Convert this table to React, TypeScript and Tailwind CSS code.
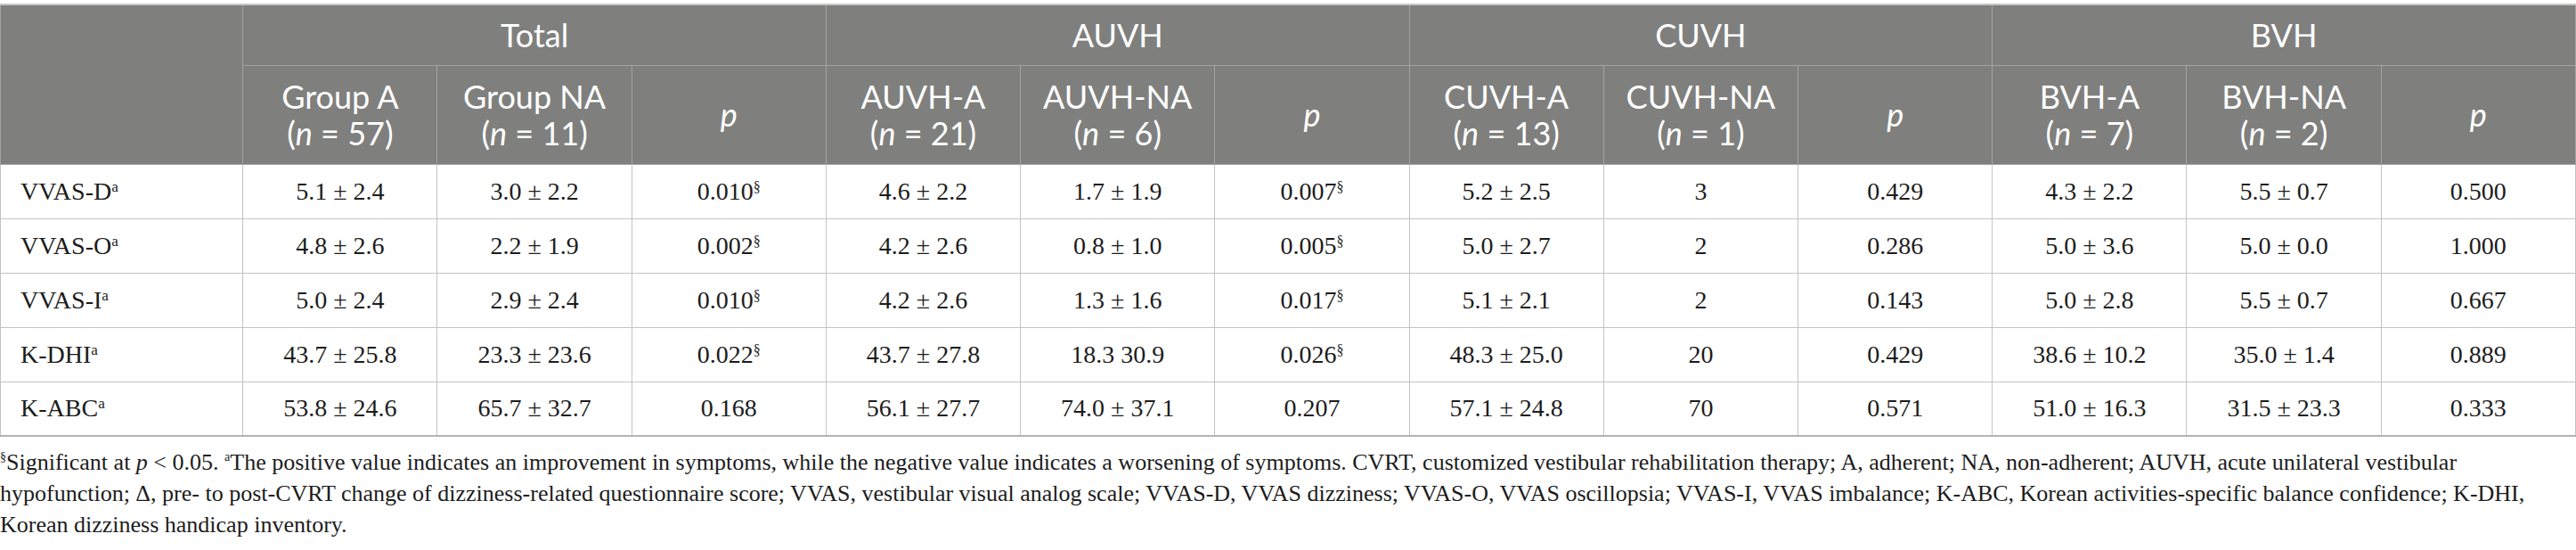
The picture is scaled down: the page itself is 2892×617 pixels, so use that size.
import React from 'react';

type Row = { label: string; cells: string[]; sig: boolean[] };

// 12 data columns: Total (A, NA, p), AUVH (A, NA, p), CUVH (A, NA, p), BVH (A, NA, p)
const rows: Row[] = [
  {
    label: 'VVAS-D',
    cells: ['5.1 ± 2.4', '3.0 ± 2.2', '0.010', '4.6 ± 2.2', '1.7 ± 1.9', '0.007', '5.2 ± 2.5', '3', '0.429', '4.3 ± 2.2', '5.5 ± 0.7', '0.500'],
    sig: [false, false, true, false, false, true, false, false, false, false, false, false],
  },
  {
    label: 'VVAS-O',
    cells: ['4.8 ± 2.6', '2.2 ± 1.9', '0.002', '4.2 ± 2.6', '0.8 ± 1.0', '0.005', '5.0 ± 2.7', '2', '0.286', '5.0 ± 3.6', '5.0 ± 0.0', '1.000'],
    sig: [false, false, true, false, false, true, false, false, false, false, false, false],
  },
  {
    label: 'VVAS-I',
    cells: ['5.0 ± 2.4', '2.9 ± 2.4', '0.010', '4.2 ± 2.6', '1.3 ± 1.6', '0.017', '5.1 ± 2.1', '2', '0.143', '5.0 ± 2.8', '5.5 ± 0.7', '0.667'],
    sig: [false, false, true, false, false, true, false, false, false, false, false, false],
  },
  {
    label: 'K-DHI',
    cells: ['43.7 ± 25.8', '23.3 ± 23.6', '0.022', '43.7 ± 27.8', '18.3 30.9', '0.026', '48.3 ± 25.0', '20', '0.429', '38.6 ± 10.2', '35.0 ± 1.4', '0.889'],
    sig: [false, false, true, false, false, true, false, false, false, false, false, false],
  },
  {
    label: 'K-ABC',
    cells: ['53.8 ± 24.6', '65.7 ± 32.7', '0.168', '56.1 ± 27.7', '74.0 ± 37.1', '0.207', '57.1 ± 24.8', '70', '0.571', '51.0 ± 16.3', '31.5 ± 23.3', '0.333'],
    sig: new Array(12).fill(false),
  },
];

const groups = ['Total', 'AUVH', 'CUVH', 'BVH'];

const subHeads: { name: string; n: string }[] = [
  { name: 'Group A', n: '57' },
  { name: 'Group NA', n: '11' },
  { name: 'AUVH-A', n: '21' },
  { name: 'AUVH-NA', n: '6' },
  { name: 'CUVH-A', n: '13' },
  { name: 'CUVH-NA', n: '1' },
  { name: 'BVH-A', n: '7' },
  { name: 'BVH-NA', n: '2' },
];

const headCell = 'border border-[#a3a3a3] font-normal text-center align-middle';
const bodyCell = 'border border-[#c4c4c4] text-center align-middle';

export default function App() {
  return (
    <div className="w-[2892px] bg-white pt-[4px] font-['Liberation_Serif',serif] text-[#1c1c1c]">
      <table className="w-full table-fixed border-collapse border-t-2 border-t-[#c6c6c6]">
        <colgroup>
          <col className="w-[272px]" />
          {Array.from({ length: 12 }).map((_, i) => (
            <col key={i} className="w-[218px]" />
          ))}
        </colgroup>
        <thead className="bg-[#7f807e] text-white font-['Lato',sans-serif] text-[36px] leading-[41px]">
          <tr className="h-[68px]">
            <th rowSpan={2} className={headCell} />
            {groups.map((g) => (
              <th key={g} colSpan={3} className={headCell}>
                {g}
              </th>
            ))}
          </tr>
          <tr className="h-[111px]">
            {groups.map((g, gi) => (
              <React.Fragment key={g}>
                {subHeads.slice(gi * 2, gi * 2 + 2).map((s) => (
                  <th key={s.name} className={headCell}>
                    {s.name}
                    <br />
                    (<i>n</i> = {s.n})
                  </th>
                ))}
                <th className={headCell}>
                  <i>p</i>
                </th>
              </React.Fragment>
            ))}
          </tr>
        </thead>
        <tbody className="text-[28px]">
          {rows.map((r, ri) => (
            <tr key={r.label} className={ri === rows.length - 1 ? 'h-[61px] border-b-2 border-b-[#b4b4b4]' : 'h-[61px]'}>
              <td className={`${bodyCell} text-left pl-[22px]`}>
                {r.label}
                <sup className="text-[17px] -top-[9px]">a</sup>
              </td>
              {r.cells.map((c, ci) => (
                <td key={ci} className={bodyCell}>
                  {c}
                  {r.sig[ci] && <sup className="text-[16px] -top-[9px]">§</sup>}
                </td>
              ))}
            </tr>
          ))}
        </tbody>
      </table>
      <p className="mt-[11px] text-[26px] leading-[35px]">
        <sup className="text-[14px] -top-[10px]">§</sup>Significant at <i>p</i> &lt; 0.05.{' '}
        <sup className="text-[14px] -top-[10px]">a</sup>The positive value indicates an improvement in symptoms, while the
        negative value indicates a worsening of symptoms. CVRT, customized vestibular rehabilitation therapy; A, adherent;
        NA, non-adherent; AUVH, acute unilateral vestibular hypofunction; Δ, pre- to post-CVRT change of dizziness-related
        questionnaire score; VVAS, vestibular visual analog scale; VVAS-D, VVAS dizziness; VVAS-O, VVAS oscillopsia;
        VVAS-I, VVAS imbalance; K-ABC, Korean activities-specific balance confidence; K-DHI, Korean dizziness handicap
        inventory.
      </p>
    </div>
  );
}
